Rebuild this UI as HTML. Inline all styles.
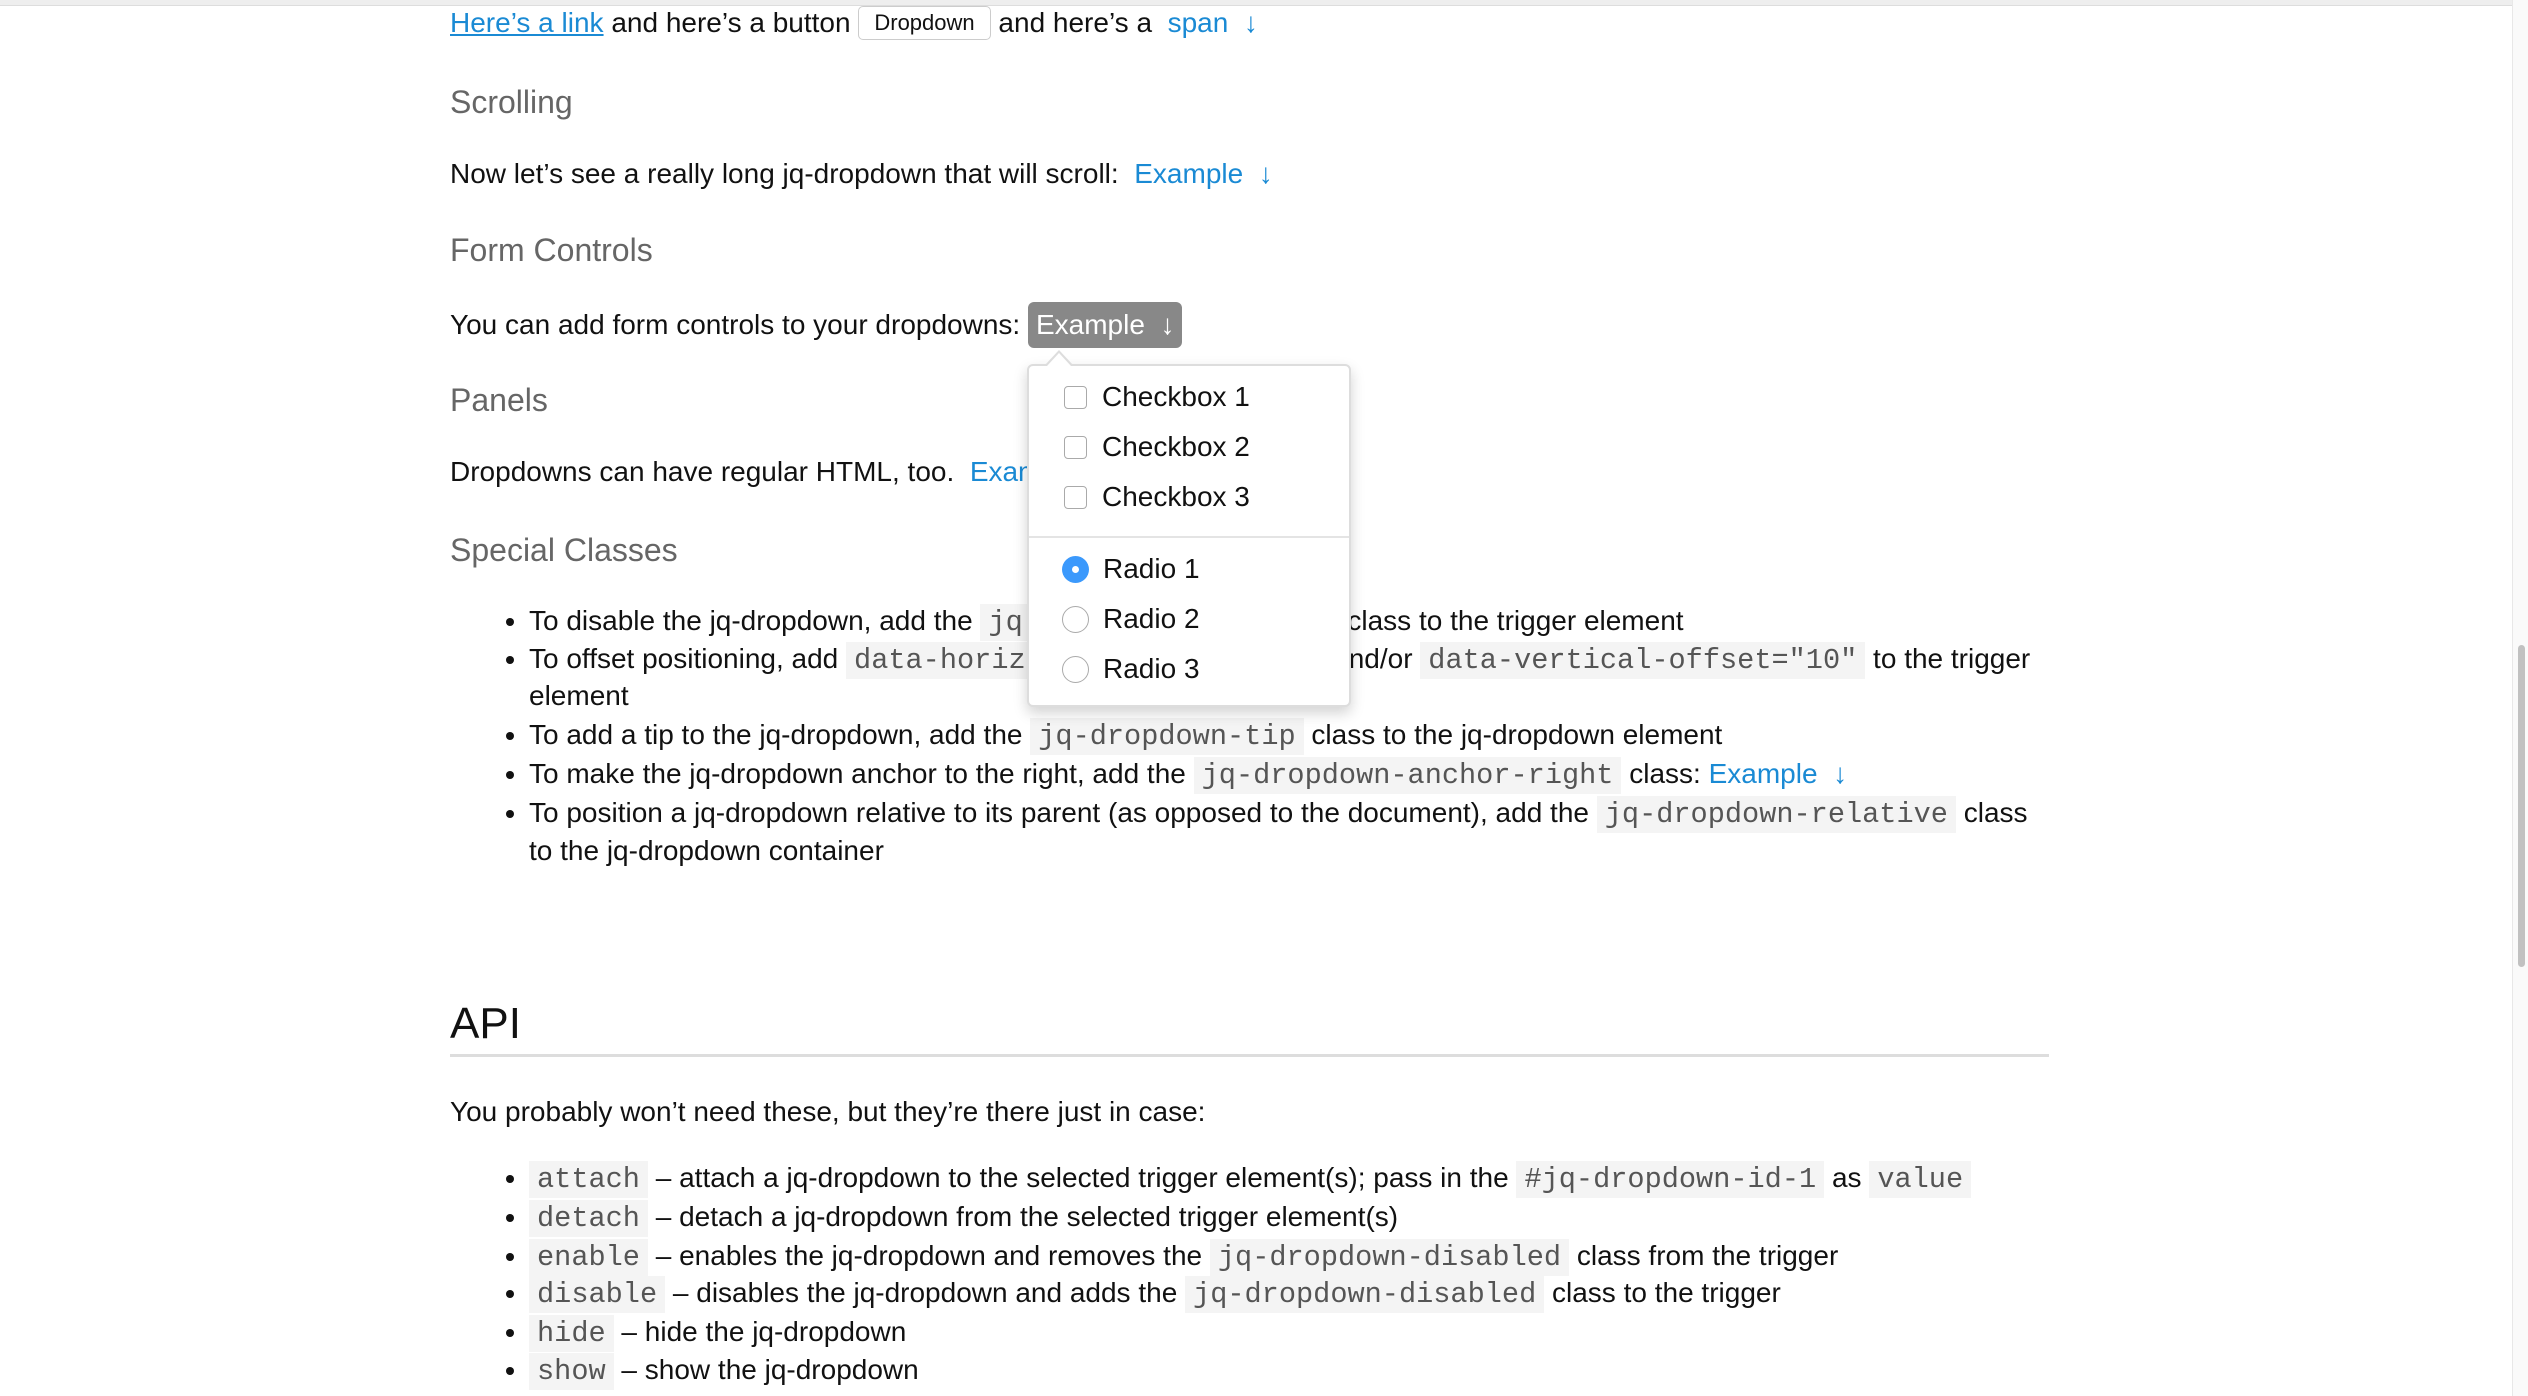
<!DOCTYPE html>
<html><head><meta charset="utf-8"><style>
html,body{margin:0;padding:0;background:#fff;width:2528px;height:1396px;overflow:hidden}
body{font-family:"Liberation Sans",Arial,sans-serif;font-size:28px;color:#111;position:relative}
.l{position:absolute;left:450px;white-space:nowrap;line-height:40px}
.h{color:#666;font-size:32px}
a,.a{color:#1a8ad4;text-decoration:none}
code{font-family:"Liberation Mono",monospace;font-size:28.6px;background:#f4f4f4;color:#555;padding:2px 8px}
.b{position:absolute;left:506px;width:8px;height:8px;border-radius:50%;background:#111}
.bl{left:529px}
</style></head><body>
<div style="position:absolute;left:0;top:0;width:2528px;height:5px;background:#eee;border-bottom:1px solid #ddd"></div>
<div class="l" style="top:3px"><a style="text-decoration:underline">Here’s a link</a> and here’s a button <span style="display:inline-block;border:1px solid #ccc;border-radius:5px;font-size:22px;padding:0 15px;line-height:32px;vertical-align:2px">Dropdown</span> and here’s a &nbsp;<span class="a">span &nbsp;↓</span></div>
<div class="l h" style="top:82px">Scrolling</div>
<div class="l" style="top:154px">Now let’s see a really long jq-dropdown that will scroll: &nbsp;<span class="a">Example &nbsp;↓</span></div>
<div class="l h" style="top:230px">Form Controls</div>
<div class="l" style="top:302px">You can add form controls to your dropdowns: <span style="display:inline-block;background:#888;color:#fff;border-radius:6px;padding:0 8px;line-height:46px">Example &nbsp;↓</span></div>
<div class="l h" style="top:380px">Panels</div>
<div class="l" style="top:452px">Dropdowns can have regular HTML, too. &nbsp;<span class="a">Example &nbsp;↓</span></div>
<div class="l h" style="top:530px">Special Classes</div>

<div class="b" style="top:618px"></div><div class="l bl" style="top:601px">To disable the jq-dropdown, add the <code>jq-dropdown-disabled</code> class to the trigger element</div>
<div class="b" style="top:656px"></div><div class="l bl" style="top:639px">To offset positioning, add <code>data-horizontal-offset="10"</code> and/or <code>data-vertical-offset="10"</code> to the trigger</div>
<div class="l bl" style="top:676px">element</div>
<div class="b" style="top:732px"></div><div class="l bl" style="top:715px">To add a tip to the jq-dropdown, add the <code>jq-dropdown-tip</code> class to the jq-dropdown element</div>
<div class="b" style="top:771px"></div><div class="l bl" style="top:754px">To make the jq-dropdown anchor to the right, add the <code>jq-dropdown-anchor-right</code> class: <span class="a">Example &nbsp;↓</span></div>
<div class="b" style="top:810px"></div><div class="l bl" style="top:793px">To position a jq-dropdown relative to its parent (as opposed to the document), add the <code>jq-dropdown-relative</code> class</div>
<div class="l bl" style="top:831px">to the jq-dropdown container</div>

<div class="l" style="top:996px;font-size:44px;line-height:56px">API</div>
<div style="position:absolute;left:450px;top:1054px;width:1599px;height:3px;background:#ddd"></div>
<div class="l" style="top:1092px">You probably won’t need these, but they’re there just in case:</div>
<div class="b" style="top:1175px"></div><div class="l bl" style="top:1158px"><code>attach</code> – attach a jq-dropdown to the selected trigger element(s); pass in the <code>#jq-dropdown-id-1</code> as <code>value</code></div>
<div class="b" style="top:1214px"></div><div class="l bl" style="top:1197px"><code>detach</code> – detach a jq-dropdown from the selected trigger element(s)</div>
<div class="b" style="top:1253px"></div><div class="l bl" style="top:1236px"><code>enable</code> – enables the jq-dropdown and removes the <code>jq-dropdown-disabled</code> class from the trigger</div>
<div class="b" style="top:1290px"></div><div class="l bl" style="top:1273px"><code>disable</code> – disables the jq-dropdown and adds the <code>jq-dropdown-disabled</code> class to the trigger</div>
<div class="b" style="top:1329px"></div><div class="l bl" style="top:1312px"><code>hide</code> – hide the jq-dropdown</div>
<div class="b" style="top:1367px"></div><div class="l bl" style="top:1350px"><code>show</code> – show the jq-dropdown</div>

<div style="position:absolute;left:1027px;top:364px;width:320px;height:339px;background:#fff;border:2px solid #ddd;border-radius:6px;box-shadow:0 6px 14px rgba(0,0,0,.18);z-index:5">
 <div style="position:absolute;left:0;top:170px;width:320px;height:2px;background:#e4e4e4"></div>
</div>
<div style="position:absolute;left:1045px;top:350px;width:0;height:0;border-left:14px solid transparent;border-right:14px solid transparent;border-bottom:15px solid #ddd;z-index:6"></div>
<div style="position:absolute;left:1047px;top:353px;width:0;height:0;border-left:12px solid transparent;border-right:12px solid transparent;border-bottom:13px solid #fff;z-index:6"></div>
<div style="position:absolute;left:1027px;top:364px;width:320px;height:339px;z-index:7;font-size:28px;line-height:40px">
 <div style="position:absolute;left:37px;top:22px;width:21px;height:21px;border:1.5px solid #aaa;border-radius:4px"></div><div style="position:absolute;left:75px;top:13px">Checkbox 1</div>
 <div style="position:absolute;left:37px;top:72px;width:21px;height:21px;border:1.5px solid #aaa;border-radius:4px"></div><div style="position:absolute;left:75px;top:63px">Checkbox 2</div>
 <div style="position:absolute;left:37px;top:122px;width:21px;height:21px;border:1.5px solid #aaa;border-radius:4px"></div><div style="position:absolute;left:75px;top:113px">Checkbox 3</div>
 <div style="position:absolute;left:35px;top:192px;width:27px;height:27px;border-radius:50%;background:#3b99fc"><div style="position:absolute;left:10px;top:10px;width:7px;height:7px;border-radius:50%;background:#fff"></div></div><div style="position:absolute;left:76px;top:185px">Radio 1</div>
 <div style="position:absolute;left:35px;top:242px;width:25px;height:25px;border-radius:50%;border:1.5px solid #aaa"></div><div style="position:absolute;left:76px;top:235px">Radio 2</div>
 <div style="position:absolute;left:35px;top:292px;width:25px;height:25px;border-radius:50%;border:1.5px solid #aaa"></div><div style="position:absolute;left:76px;top:285px">Radio 3</div>
</div>

<div style="position:absolute;left:2512px;top:0;width:16px;height:1396px;background:#fafafa;border-left:1px solid #e8e8e8"></div>
<div style="position:absolute;left:2518px;top:645px;width:7px;height:322px;border-radius:4px;background:#c1c1c1"></div>
</body></html>
